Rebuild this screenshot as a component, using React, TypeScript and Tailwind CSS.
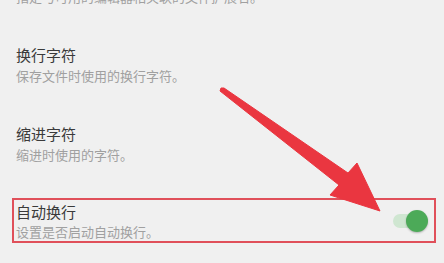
import React from "react";

const font = { fontFamily: '"Noto Sans CJK SC", "Noto Sans", sans-serif' };

export default function App() {
  return (
    <div className="relative w-[444px] h-[263px] overflow-hidden bg-[#f0f0f0]" style={font}>
      <div className="flex flex-col">
        <p className="mt-[-12px] px-[16px] text-[13px] leading-[18px] text-[#a0a0a0]">
          指定与可用的编辑器相关联的文件扩展名。
        </p>

        <div className="mt-[39px] px-[16px] flex flex-col">
          <p className="text-[15px] leading-[20px] text-[#3a3a3a]">换行字符</p>
          <p className="mt-[2px] text-[13px] leading-[18px] text-[#a0a0a0]">保存文件时使用的换行字符。</p>
        </div>

        <div className="mt-[39px] px-[16px] flex flex-col">
          <p className="text-[15px] leading-[20px] text-[#3a3a3a]">缩进字符</p>
          <p className="mt-[2px] text-[13px] leading-[18px] text-[#a0a0a0]">缩进时使用的字符。</p>
        </div>

        <div className="mt-[34px] ml-[12px] w-[424px] border-2 border-[#e0505a] pl-[2px] pr-[6px] pt-[2px] pb-[1px] flex items-center justify-between">
          <div className="flex flex-col">
            <p className="text-[15px] leading-[20px] text-[#3a3a3a]">自动换行</p>
            <p className="mt-[2px] text-[13px] leading-[16px] text-[#a0a0a0]">设置是否启动自动换行。</p>
          </div>
          <div className="relative w-[35px] h-[22px]">
            <div className="absolute left-0 top-[4px] w-[32px] h-[14px] rounded-full bg-[#cfe6d1]" />
            <div className="absolute right-0 top-0 w-[22px] h-[22px] rounded-full bg-[#4caa58] shadow-[0_1px_2px_rgba(0,0,0,0.25)]" />
          </div>
        </div>
      </div>

      <svg className="absolute left-0 top-0" width="444" height="263" viewBox="0 0 444 263">
        <polygon
          points="221,88 224,88 348,173 357,163 380,211 330,195 339,185 220,91"
          fill="#ea3640"
          stroke="#ea3640"
          strokeWidth="1"
          strokeLinejoin="round"
        />
      </svg>
    </div>
  );
}
